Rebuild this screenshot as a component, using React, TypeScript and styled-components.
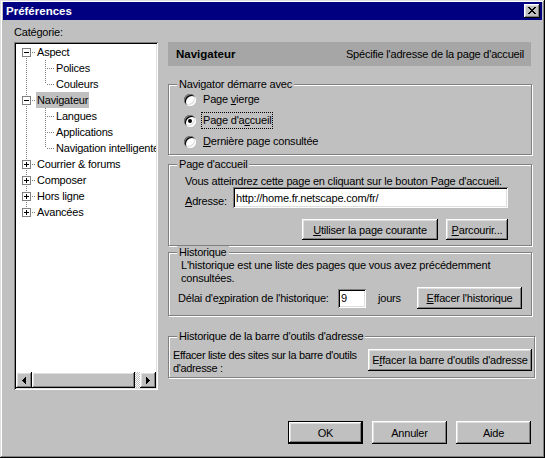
import React from 'react';
import styled, { createGlobalStyle, css } from 'styled-components';

const GlobalStyle = createGlobalStyle`
  * { box-sizing: border-box; }
  html, body { margin: 0; padding: 0; background: #c0c0c0; }
  body {
    font-family: 'Liberation Sans', Arial, sans-serif;
    font-size: 11px;
    letter-spacing: -0.2px;
    color: #000;
  }
`;

const raised = css`
  background: #c0c0c0;
  box-shadow: inset -1px -1px #000, inset 1px 1px #fff, inset -2px -2px #808080, inset 2px 2px #dfdfdf;
`;

const sunken = css`
  background: #fff;
  box-shadow: inset 1px 1px #808080, inset -1px -1px #fff, inset 2px 2px #000, inset -2px -2px #dfdfdf;
`;

type Line = 'full' | 'top' | 'bottom' | 'none';

interface TreeItem {
  label: string;
  level: number;
  lines: Line[];
  box?: '+' | '-';
  selected?: boolean;
}

const tree: TreeItem[] = [
  { label: 'Aspect', level: 0, lines: ['bottom'], box: '-' },
  { label: 'Polices', level: 1, lines: ['full', 'full'] },
  { label: 'Couleurs', level: 1, lines: ['full', 'top'] },
  { label: 'Navigateur', level: 0, lines: ['full'], box: '-', selected: true },
  { label: 'Langues', level: 1, lines: ['full', 'full'] },
  { label: 'Applications', level: 1, lines: ['full', 'full'] },
  { label: 'Navigation intelligente', level: 1, lines: ['full', 'top'] },
  { label: 'Courrier & forums', level: 0, lines: ['full'], box: '+' },
  { label: 'Composer', level: 0, lines: ['full'], box: '+' },
  { label: 'Hors ligne', level: 0, lines: ['full'], box: '+' },
  { label: 'Avancées', level: 0, lines: ['top'], box: '+' },
];

function CloseIcon() {
  return (
    <svg width="8" height="7" viewBox="0 0 8 7" shapeRendering="crispEdges">
      <path
        d="M0 0h2v1h-2zM6 0h2v1h-2zM1 1h2v1h-2zM5 1h2v1h-2zM2 2h4v1h-4zM3 3h2v1h-2zM2 4h4v1h-4zM1 5h2v1h-2zM5 5h2v1h-2zM0 6h2v1h-2zM6 6h2v1h-2z"
        fill="#000"
      />
    </svg>
  );
}

function Expander({ kind }: { kind: '+' | '-' }) {
  return (
    <ExpanderSvg width="9" height="9" viewBox="0 0 9 9" shapeRendering="crispEdges">
      <rect x="0.5" y="0.5" width="8" height="8" fill="#fff" stroke="#808080" />
      <path d="M2 4h5v1h-5z" fill="#000" />
      {kind === '+' && <path d="M4 2h1v5h-1z" fill="#000" />}
    </ExpanderSvg>
  );
}

function Arrow({ dir }: { dir: 'left' | 'right' }) {
  return (
    <svg width="4" height="7" viewBox="0 0 4 7" shapeRendering="crispEdges">
      {dir === 'left' ? (
        <path d="M3 0h1v7h-1zM2 1h1v5h-1zM1 2h1v3h-1zM0 3h1v1h-1z" fill="#000" />
      ) : (
        <path d="M0 0h1v7h-1zM1 1h1v5h-1zM2 2h1v3h-1zM3 3h1v1h-1z" fill="#000" />
      )}
    </svg>
  );
}

export default function App() {
  return (
    <>
      <GlobalStyle />
      <Window>
        <TitleBar>
          <TitleText>Préférences</TitleText>
          <CloseButton>
            <CloseIcon />
          </CloseButton>
        </TitleBar>

        <Main>
          <Sidebar>
            <FieldLabel>Catégorie:</FieldLabel>
            <TreeBox>
              <TreeList>
                {tree.map((item) => (
                  <TreeRow key={item.label}>
                    {item.lines.map((line, i) => (
                      <Gutter key={i} $line={line} $branch={i === item.lines.length - 1}>
                        {item.box && i === item.lines.length - 1 && <Expander kind={item.box} />}
                      </Gutter>
                    ))}
                    <TreeLabel $selected={item.selected}>{item.label}</TreeLabel>
                  </TreeRow>
                ))}
              </TreeList>
              <ScrollBar>
                <ScrollButton>
                  <Arrow dir="left" />
                </ScrollButton>
                <Track>
                  <Thumb />
                </Track>
                <ScrollButton>
                  <Arrow dir="right" />
                </ScrollButton>
              </ScrollBar>
            </TreeBox>
          </Sidebar>

          <Panel>
            <Header>
              <HeaderTitle>Navigateur</HeaderTitle>
              <span>Spécifie l'adresse de la page d'accueil</span>
            </Header>

            <Group $width={364} $top={12}>
              <Legend>Navigator démarre avec</Legend>
              <RadioList>
                <RadioRow>
                  <Radio />
                  <RadioLabel>
                    Page <U>v</U>ierge
                  </RadioLabel>
                </RadioRow>
                <RadioRow>
                  <Radio $checked />
                  <RadioLabel $focused>
                    Page d'a<U>c</U>cueil
                  </RadioLabel>
                </RadioRow>
                <RadioRow>
                  <Radio />
                  <RadioLabel>
                    <U>D</U>ernière page consultée
                  </RadioLabel>
                </RadioRow>
              </RadioList>
            </Group>

            <Group $width={364} $top={3}>
              <Legend>Page d'accueil</Legend>
              <GroupBody $pad="4px 23px 5px 16px">
                <Text>Vous atteindrez cette page en cliquant sur le bouton Page d'accueil.</Text>
                <AddressRow>
                  <InlineLabel $width={48}>
                    <U>A</U>dresse:
                  </InlineLabel>
                  <TextField $width={275} $height={21} readOnly value="http://home.fr.netscape.com/fr/" />
                </AddressRow>
                <ButtonRow>
                  <Button $width={136}>
                    <U>U</U>tiliser la page courante
                  </Button>
                  <Button $width={62}>
                    <U>P</U>arcourir...
                  </Button>
                </ButtonRow>
              </GroupBody>
            </Group>

            <Group $width={364} $top={0}>
              <Legend>Historique</Legend>
              <GroupBody $pad="0 9px 6px 9px">
                <Paragraph>
                  L'historique est une liste des pages que vous avez précédemment consultées.
                </Paragraph>
                <ExpiryRow>
                  <InlineLabel $width={160}>
                    Délai d'e<U>x</U>piration de l'historique:
                  </InlineLabel>
                  <TextField $width={28} $height={19} readOnly value="9" />
                  <Units>jours</Units>
                  <Button $width={105} $height={22}>
                    <U>E</U>ffacer l'historique
                  </Button>
                </ExpiryRow>
              </GroupBody>
            </Group>

            <Group $width={367} $top={14}>
              <Legend>Historique de la barre d'outils d'adresse</Legend>
              <GroupBody $pad="6px 2px 2px 4px">
                <ClearRow>
                  <ClearText>Effacer liste des sites sur la barre d'outils d'adresse :</ClearText>
                  <Button $width={164} $height={22}>
                    E<U>f</U>facer la barre d'outils d'adresse
                  </Button>
                </ClearRow>
              </GroupBody>
            </Group>
          </Panel>
        </Main>

        <Footer>
          <Button $width={75} $height={23} $default>
            OK
          </Button>
          <Button $width={75} $height={23}>
            Annuler
          </Button>
          <Button $width={75} $height={23}>
            Aide
          </Button>
        </Footer>
      </Window>
    </>
  );
}

const Window = styled.div`
  width: 545px;
  height: 458px;
  background: #c0c0c0;
  box-shadow: inset -1px -1px #000, inset 1px 1px #dfdfdf, inset -2px -2px #808080, inset 2px 2px #fff;
  padding: 2px 3px 3px 3px;
  display: flex;
  flex-direction: column;
`;

const TitleBar = styled.div`
  height: 18px;
  background: #000080;
  display: flex;
  align-items: center;
  justify-content: space-between;
  padding: 0 2px 0 3px;
  flex: none;
`;

const TitleText = styled.span`
  color: #fff;
  font-weight: bold;
  font-size: 11.5px;
  letter-spacing: 0;
`;

const CloseButton = styled.div`
  ${raised}
  width: 16px;
  height: 14px;
  display: flex;
  align-items: center;
  justify-content: center;
  padding-bottom: 1px;
`;

const Main = styled.div`
  display: flex;
  gap: 10px;
  padding: 6px 0 0 11px;
`;

const Sidebar = styled.div`
  width: 144px;
  flex: none;
  display: flex;
  flex-direction: column;
`;

const FieldLabel = styled.div`
  line-height: 13px;
  height: 13px;
  margin-bottom: 3px;
`;

const TreeBox = styled.div`
  ${sunken}
  height: 348px;
  padding: 2px;
  display: flex;
  flex-direction: column;
`;

const TreeList = styled.div`
  flex: 1;
  overflow: hidden;
  padding-left: 1px;
`;

const TreeRow = styled.div`
  display: flex;
  height: 16px;
  white-space: nowrap;
`;

const Gutter = styled.span<{ $line: Line; $branch: boolean }>`
  position: relative;
  width: 19px;
  flex: none;
  &::before {
    content: '';
    position: absolute;
    left: 9px;
    width: 1px;
    top: ${(p) => (p.$line === 'bottom' ? '8px' : '0')};
    bottom: ${(p) => (p.$line === 'top' ? '8px' : '0')};
    display: ${(p) => (p.$line === 'none' ? 'none' : 'block')};
    background: repeating-linear-gradient(to bottom, #808080 0 1px, transparent 1px 2px);
  }
  &::after {
    content: '';
    position: absolute;
    top: 8px;
    left: 10px;
    right: 0;
    height: 1px;
    display: ${(p) => (p.$branch ? 'block' : 'none')};
    background: repeating-linear-gradient(to right, transparent 0 1px, #808080 1px 2px);
  }
`;

const ExpanderSvg = styled.svg`
  position: absolute;
  left: 5px;
  top: 4px;
  z-index: 1;
`;

const TreeLabel = styled.span<{ $selected?: boolean }>`
  padding: 0 1px;
  line-height: 16px;
  background: ${(p) => (p.$selected ? '#c0c0c0' : 'transparent')};
`;

const ScrollBar = styled.div`
  height: 16px;
  display: flex;
  flex: none;
`;

const ScrollButton = styled.div`
  ${raised}
  width: 16px;
  height: 16px;
  flex: none;
  display: flex;
  align-items: center;
  justify-content: center;
`;

const Track = styled.div`
  flex: 1;
  display: flex;
  background: repeating-conic-gradient(#c0c0c0 0 25%, #fff 0 50%) 0 0 / 2px 2px;
`;

const Thumb = styled.div`
  ${raised}
  width: 103px;
  height: 16px;
`;

const Panel = styled.div`
  width: 367px;
  flex: none;
  margin-top: 16px;
  display: flex;
  flex-direction: column;
`;

const Header = styled.div`
  width: 363px;
  height: 24px;
  background: #a6a6a6;
  display: flex;
  align-items: center;
  justify-content: space-between;
  padding: 0 7px 0 8px;
`;

const HeaderTitle = styled.span`
  font-weight: bold;
  font-size: 11.5px;
  letter-spacing: 0;
`;

const Group = styled.fieldset<{ $width: number; $top: number }>`
  margin: ${(p) => p.$top}px 0 0 0;
  padding: 0;
  min-width: 0;
  width: ${(p) => p.$width}px;
  border: 1px solid #808080;
  box-shadow: inset 1px 1px #fff, 1px 1px #fff;
`;

const Legend = styled.legend`
  margin-left: 8px;
  padding: 0 2px;
  line-height: 13px;
  background: #c0c0c0;
`;

const GroupBody = styled.div<{ $pad: string }>`
  padding: ${(p) => p.$pad};
  display: flex;
  flex-direction: column;
`;

const RadioList = styled.div`
  margin-top: -2px;
  padding-bottom: 2px;
  display: flex;
  flex-direction: column;
`;

const RadioRow = styled.div`
  height: 21px;
  display: flex;
  align-items: center;
  padding-left: 15px;
`;

const Radio = styled.span<{ $checked?: boolean }>`
  width: 12px;
  height: 12px;
  flex: none;
  border-radius: 50%;
  background: #fff;
  box-shadow: inset 1px 1px #808080, inset -1px -1px #fff, inset 2px 2px #000, inset -2px -2px #dfdfdf;
  display: flex;
  align-items: center;
  justify-content: center;
  margin-right: 6px;
  &::after {
    content: '';
    width: 4px;
    height: 4px;
    border-radius: 50%;
    background: ${(p) => (p.$checked ? '#000' : 'transparent')};
  }
`;

const RadioLabel = styled.span<{ $focused?: boolean }>`
  padding: 1px;
  line-height: 13px;
  outline: ${(p) => (p.$focused ? '1px dotted #000' : 'none')};
`;

const U = styled.span`
  text-decoration: underline;
`;

const Text = styled.div`
  line-height: 13px;
`;

const Paragraph = styled.div`
  line-height: 13px;
  width: 330px;
  padding-left: 3px;
`;

const AddressRow = styled.div`
  display: flex;
  align-items: flex-end;
  margin-top: -1px;
`;

const InlineLabel = styled.span<{ $width: number }>`
  width: ${(p) => p.$width}px;
  flex: none;
  line-height: 13px;
`;

const TextField = styled.input<{ $width: number; $height: number }>`
  ${sunken}
  width: ${(p) => p.$width}px;
  height: ${(p) => p.$height}px;
  border: none;
  outline: none;
  margin: 0;
  padding: 0 3px;
  font: inherit;
  letter-spacing: inherit;
  color: #000;
`;

const ButtonRow = styled.div`
  display: flex;
  justify-content: flex-end;
  gap: 8px;
  margin-top: 11px;
`;

const Button = styled.button<{ $width: number; $height?: number; $default?: boolean }>`
  ${raised}
  ${(p) =>
    p.$default &&
    css`
      box-shadow: inset 0 0 0 1px #000, inset -2px -2px #000, inset 2px 2px #fff, inset -3px -3px #808080,
        inset 3px 3px #dfdfdf;
    `}
  width: ${(p) => p.$width}px;
  height: ${(p) => p.$height ?? 21}px;
  flex: none;
  border: none;
  margin: 0;
  padding: 0;
  font: inherit;
  letter-spacing: inherit;
  color: #000;
  white-space: nowrap;
  display: flex;
  align-items: center;
  justify-content: center;
`;

const ExpiryRow = styled.div`
  display: flex;
  align-items: center;
  height: 22px;
  margin-top: 2px;
`;

const Units = styled.span`
  margin-left: 12px;
  flex: 1;
`;

const ClearRow = styled.div`
  display: flex;
  align-items: flex-start;
`;

const ClearText = styled.div`
  width: 195px;
  line-height: 13px;
  letter-spacing: -0.35px;
`;

const Footer = styled.div`
  display: flex;
  justify-content: flex-end;
  gap: 9px;
  padding-right: 11px;
  margin-top: auto;
  margin-bottom: 11px;
`;
